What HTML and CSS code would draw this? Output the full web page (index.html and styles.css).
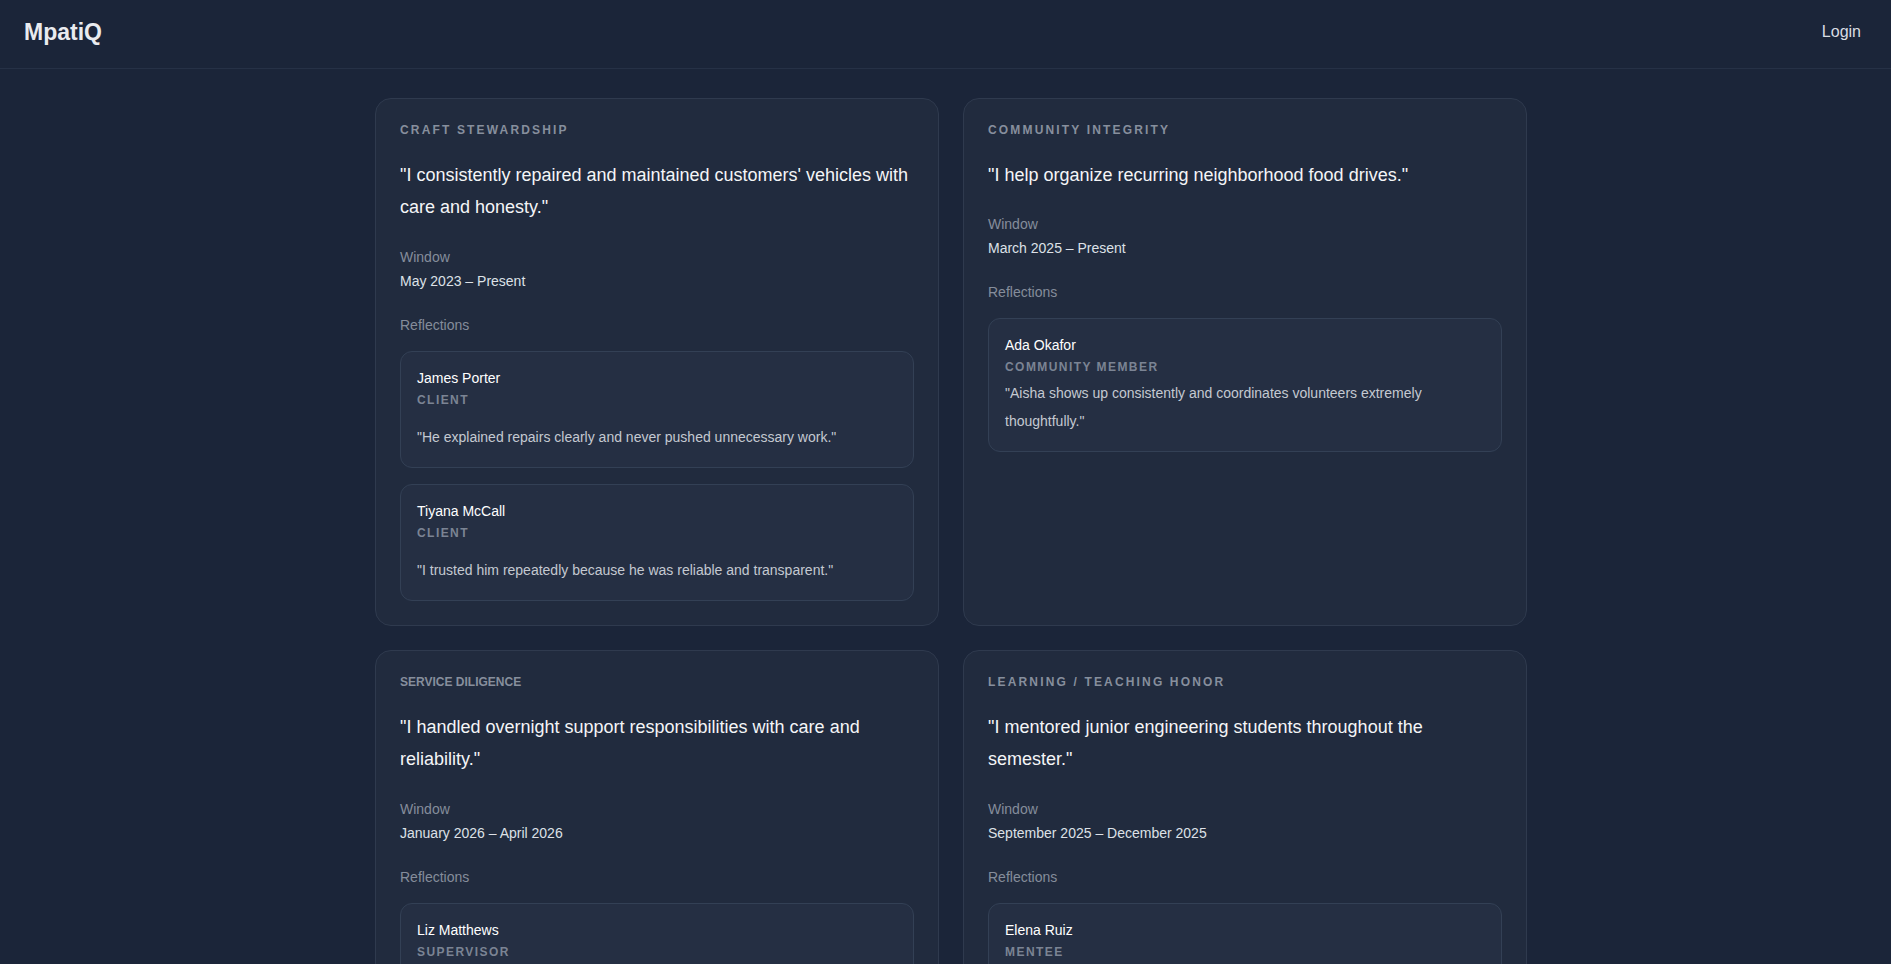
FILE: index.html
```html
<!DOCTYPE html>
<html lang="en">
<head>
    <meta charset="UTF-8">
    <meta name="viewport" content="width=device-width, initial-scale=1.0">
    <title>MpatiQ</title>
    <link rel="stylesheet" href="styles.css">
</head>
<body>
    <header class="topbar">
        <a class="brand" href="#">MpatiQ</a>
        <a class="login" href="#">Login</a>
    </header>

    <main class="page">
        <section class="claims">
            <!-- claim 1 -->
            <article class="claim-card">
                <div class="claim-category">Craft Stewardship</div>
                <p class="claim-statement">"I consistently repaired and maintained customers' vehicles with care and honesty."</p>
                <div class="claim-meta">
                    <div class="meta-label">Window</div>
                    <div class="meta-value">May 2023 – Present</div>
                </div>
                <div class="meta-label reflections-label">Reflections</div>
                <div class="reflection-list">
                    <div class="reflection">
                        <div class="reflection-name">James Porter</div>
                        <div class="reflection-role">Client</div>
                        <p class="reflection-text spaced">"He explained repairs clearly and never pushed unnecessary work."</p>
                    </div>
                    <div class="reflection">
                        <div class="reflection-name">Tiyana McCall</div>
                        <div class="reflection-role">Client</div>
                        <p class="reflection-text spaced">"I trusted him repeatedly because he was reliable and transparent."</p>
                    </div>
                </div>
            </article>

            <!-- claim 2 -->
            <article class="claim-card">
                <div class="claim-category">Community Integrity</div>
                <p class="claim-statement">"I help organize recurring neighborhood food drives."</p>
                <div class="claim-meta">
                    <div class="meta-label">Window</div>
                    <div class="meta-value">March 2025 – Present</div>
                </div>
                <div class="meta-label reflections-label">Reflections</div>
                <div class="reflection-list">
                    <div class="reflection">
                        <div class="reflection-name">Ada Okafor</div>
                        <div class="reflection-role">Community Member</div>
                        <p class="reflection-text">"Aisha shows up consistently and coordinates volunteers extremely thoughtfully."</p>
                    </div>
                </div>
            </article>

            <!-- claim 3 -->
            <article class="claim-card">
                <div class="claim-category plain">Service Diligence</div>
                <p class="claim-statement">"I handled overnight support responsibilities with care and reliability."</p>
                <div class="claim-meta">
                    <div class="meta-label">Window</div>
                    <div class="meta-value">January 2026 – April 2026</div>
                </div>
                <div class="meta-label reflections-label">Reflections</div>
                <div class="reflection-list">
                    <div class="reflection">
                        <div class="reflection-name">Liz Matthews</div>
                        <div class="reflection-role">Supervisor</div>
                        <p class="reflection-text">"She covered every overnight shift carefully and kept handoffs clear."</p>
                    </div>
                </div>
            </article>

            <!-- claim 4 -->
            <article class="claim-card">
                <div class="claim-category">Learning / Teaching Honor</div>
                <p class="claim-statement">"I mentored junior engineering students throughout the semester."</p>
                <div class="claim-meta">
                    <div class="meta-label">Window</div>
                    <div class="meta-value">September 2025 – December 2025</div>
                </div>
                <div class="meta-label reflections-label">Reflections</div>
                <div class="reflection-list">
                    <div class="reflection">
                        <div class="reflection-name">Elena Ruiz</div>
                        <div class="reflection-role">Mentee</div>
                        <p class="reflection-text">"Her weekly sessions made difficult coursework feel manageable."</p>
                    </div>
                </div>
            </article>
        </section>
    </main>
</body>
</html>
```

FILE: styles.css
```css
* {
    box-sizing: border-box;
}
body {
    margin: 0;
    font-family: 'Liberation Sans', Arial, sans-serif;
    background-color: #1b2539;
    color: #e5e7eb;
}
a {
    text-decoration: none;
}

/* top bar */
.topbar {
    height: 69px;
    padding: 0 24px 4px;
    display: flex;
    align-items: center;
    justify-content: space-between;
    border-bottom: 1px solid #263146;
}
.brand {
    font-size: 23px;
    font-weight: bold;
    color: #e9ebef;
}
.login {
    font-size: 16px;
    color: #d9dde3;
    padding: 6px;
}

/* claims grid */
.page {
    padding: 29px 0 40px 11px;
}
.claims {
    max-width: 1152px;
    margin: 0 auto;
    display: grid;
    grid-template-columns: 1fr 1fr;
    gap: 24px;
}
.claim-card {
    background-color: #212b3e;
    border: 1px solid #2f3a4e;
    border-radius: 16px;
    padding: 24px;
}
.claim-category {
    font-size: 12px;
    font-weight: bold;
    letter-spacing: 0.18em;
    text-transform: uppercase;
    color: #878f9d;
}
.claim-category.plain {
    letter-spacing: 0;
}
.claim-statement {
    margin: 22px 0 0;
    font-size: 18px;
    line-height: 1.8;
    color: #f4f5f7;
}
.claim-meta {
    margin-top: 23px;
}
.meta-label {
    font-size: 14px;
    line-height: 20px;
    color: #858d9b;
    margin-bottom: 4px;
}
.meta-value {
    font-size: 14px;
    line-height: 20px;
    color: #dde1e7;
}
.reflections-label {
    margin-top: 24px;
    margin-bottom: 16px;
}

/* reflections */
.reflection-list {
    display: flex;
    flex-direction: column;
    gap: 16px;
}
.reflection {
    background-color: #252f43;
    border: 1px solid #334055;
    border-radius: 12px;
    padding: 16px;
}
.reflection-name {
    font-size: 14px;
    line-height: 20px;
    color: #ffffff;
    margin-bottom: 4px;
}
.reflection-role {
    font-size: 12px;
    line-height: 16px;
    font-weight: bold;
    letter-spacing: 0.12em;
    text-transform: uppercase;
    color: #7b8494;
}
.reflection-text {
    margin: 4px 0 0;
    font-size: 14px;
    line-height: 28px;
    color: #c4c9d1;
}
.reflection-text.spaced {
    margin-top: 15px;
}
```
